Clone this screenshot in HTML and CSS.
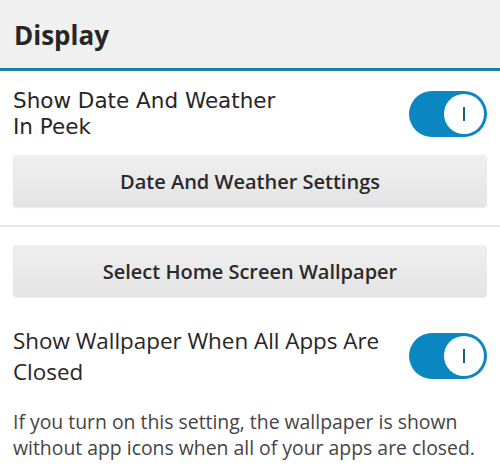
FILE: index.html
```html
<!DOCTYPE html>
<html lang="en">
<head>
    <meta charset="UTF-8">
    <meta name="viewport" content="width=device-width, initial-scale=1.0">
    <title>Display</title>
    <link rel="stylesheet" href="styles.css">
</head>
<body>

    <!-- Title bar -->
    <div class="title-bar">
        <h1>Display</h1>
    </div>

    <div class="content">
        <!-- Peek setting -->
        <div class="setting-row row-peek">
            <div class="setting-label label-peek">Show Date And Weather<br>In Peek</div>
            <div class="toggle"><span class="knob"><span class="knob-mark"></span></span></div>
        </div>

        <button class="wide-button btn-weather">Date And Weather Settings</button>

        <div class="divider"></div>

        <button class="wide-button btn-wallpaper">Select Home Screen Wallpaper</button>

        <!-- Wallpaper setting -->
        <div class="setting-row row-wallpaper">
            <div class="setting-label">Show Wallpaper When All Apps Are Closed</div>
            <div class="toggle"><span class="knob"><span class="knob-mark"></span></span></div>
        </div>

        <p class="help-text">If you turn on this setting, the wallpaper is shown without app icons when all of your apps are closed.</p>
    </div>

</body>
</html>
```

FILE: styles.css
```css
/* General styling */
body {
    margin: 0;
    font-family: "Open Sans", "Noto Sans", sans-serif;
    background-color: #fff;
    color: #262626;
    width: 500px;
    height: 469px;
    overflow: hidden;
}

.title-bar {
    height: 68px;
    background-color: #f0f0f0;
    border-bottom: 3px solid #1c7eac;
    display: flex;
    align-items: center;
    padding: 0 14px;
}

h1 {
    margin: 0;
    margin-top: 2px;
    font-size: 26px;
    font-weight: 700;
    color: #262626;
}

.content {
    padding: 0 13px;
}

.setting-row {
    display: flex;
    align-items: center;
    justify-content: space-between;
}

.row-peek {
    margin-top: 17px;
}

.row-wallpaper {
    margin-top: 28px;
}

.setting-label {
    font-size: 22.4px;
    line-height: 31px;
    color: #262626;
    width: 390px;
}

.label-peek {
    font-family: "DejaVu Sans", sans-serif;
    font-size: 21.5px;
    line-height: 26px;
}

.toggle {
    width: 78px;
    height: 46px;
    border-radius: 23px;
    background-color: #0a87c1;
    display: flex;
    align-items: center;
    justify-content: flex-end;
    padding-right: 3px;
    box-sizing: border-box;
    flex-shrink: 0;
}

.knob {
    width: 40px;
    height: 40px;
    border-radius: 50%;
    background-color: #fff;
    display: flex;
    align-items: center;
    justify-content: center;
}

.knob-mark {
    width: 2px;
    height: 14px;
    background-color: #1b5e80;
}

.wide-button {
    display: block;
    width: 100%;
    height: 52px;
    border: none;
    border-radius: 3px;
    background: linear-gradient(#efefef, #e4e4e4);
    box-shadow: 0 1px 1px rgba(0, 0, 0, 0.08);
    font-family: "Open Sans", "Noto Sans", sans-serif;
    font-size: 20px;
    font-weight: 600;
    color: #2a2a2a;
}

.btn-weather {
    margin-top: 15px;
}

.divider {
    height: 2px;
    background-color: #e6e6e6;
    margin: 18px -13px 0;
}

.btn-wallpaper {
    margin-top: 18px;
}

.help-text {
    margin: 22px 0 0;
    font-size: 19.4px;
    line-height: 26px;
    color: #444;
}
```
